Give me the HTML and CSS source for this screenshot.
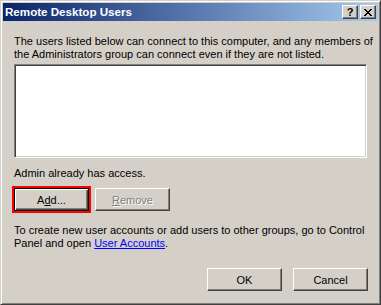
FILE: index.html
```html
<!DOCTYPE html>
<html lang="en">
<head>
    <title>Remote Desktop Users</title>
    <link rel="stylesheet" href="styles.css">
</head>
<body>
<div class="window">
    <div class="titlebar">
        <span class="title">Remote Desktop Users</span>
        <div class="caption-buttons">
            <span class="cap-btn help">?</span>
            <span class="cap-btn close">
                <svg width="8" height="7" viewBox="0 0 8 7" shape-rendering="crispEdges">
                    <path fill="#000" d="M0 0h2v1H0zM6 0h2v1H6zM1 1h2v1H1zM5 1h2v1H5zM2 2h4v1H2zM3 3h2v1H3zM2 4h4v1H2zM1 5h2v1H1zM5 5h2v1H5zM0 6h2v1H0zM6 6h2v1H6z"/>
                </svg>
            </span>
        </div>
    </div>

    <div class="content">
        <p class="intro">The users listed below can connect to this computer, and any members of<br>the Administrators group can connect even if they are not listed.</p>

        <div class="listbox"></div>

        <p class="status">Admin already has access.</p>

        <div class="button-row">
            <button class="btn highlighted">A<u>d</u>d...</button>
            <button class="btn" disabled><u>R</u>emove</button>
        </div>

        <p class="note">To create new user accounts or add users to other groups, go to Control<br>Panel and open <a href="#">User Accounts</a>.</p>

        <div class="footer">
            <button class="btn">OK</button>
            <button class="btn">Cancel</button>
        </div>
    </div>
</div>
</body>
</html>
```

FILE: styles.css
```css
* {
    box-sizing: border-box;
}

body {
    margin: 0;
    background-color: #d4d0c8;
    font-family: "Liberation Sans", Arial, sans-serif;
    font-size: 11px;
    color: #000;
}

.window {
    width: 381px;
    height: 305px;
    padding: 2px;
    background-color: #d4d0c8;
    border: 1px solid;
    border-color: #d4d0c8 #404040 #404040 #d4d0c8;
    box-shadow: inset 1px 1px #fff, inset -1px -1px #808080;
    display: flex;
    flex-direction: column;
}

.titlebar {
    height: 18px;
    padding-left: 2px;
    padding-right: 2px;
    background: linear-gradient(to right, #0a246a, #a6caf0);
    display: flex;
    align-items: center;
    justify-content: space-between;
}

.title {
    color: #fff;
    font-weight: bold;
    font-size: 11.6px;
    line-height: 18px;
}

.caption-buttons {
    display: flex;
    gap: 2px;
}

.cap-btn {
    width: 16px;
    height: 14px;
    background-color: #d4d0c8;
    border: 1px solid;
    border-color: #fff #404040 #404040 #fff;
    box-shadow: inset -1px -1px #808080;
    display: flex;
    align-items: center;
    justify-content: center;
}

.help {
    font-weight: bold;
    font-size: 11px;
    line-height: 1;
}

.close svg {
    display: block;
}

.content {
    flex: 1;
    padding: 14px 10px 0 11px;
    display: flex;
    flex-direction: column;
}

p {
    margin: 0;
    line-height: 13px;
    white-space: nowrap;
}

.listbox {
    margin-top: 3px;
    height: 94px;
    background-color: #fff;
    border: 1px solid;
    border-color: #808080 #fff #fff #808080;
    box-shadow: inset 1px 1px #404040, inset -1px -1px #d4d0c8;
    margin-right: 1px;
}

.status {
    margin-top: 9px;
}

.button-row {
    margin-top: 8px;
    display: flex;
    gap: 6px;
}

.btn {
    width: 75px;
    height: 23px;
    padding: 0;
    font-family: inherit;
    font-size: 11px;
    color: #000;
    background-color: #d4d0c8;
    border: 1px solid;
    border-color: #fff #404040 #404040 #fff;
    box-shadow: inset -1px -1px #808080;
    border-radius: 0;
}

.btn.highlighted {
    border: 1px solid #000;
    box-shadow: inset 1px 1px #fff, inset -1px -1px #404040, inset -2px -2px #808080;
    outline: 2px solid #f00;
}

.btn:disabled {
    color: #808080;
    text-shadow: 1px 1px #fff;
}

.note {
    margin-top: 13px;
}

.note a {
    color: #00f;
}

.footer {
    margin-top: 18px;
    display: flex;
    justify-content: flex-end;
    gap: 11px;
}
```
